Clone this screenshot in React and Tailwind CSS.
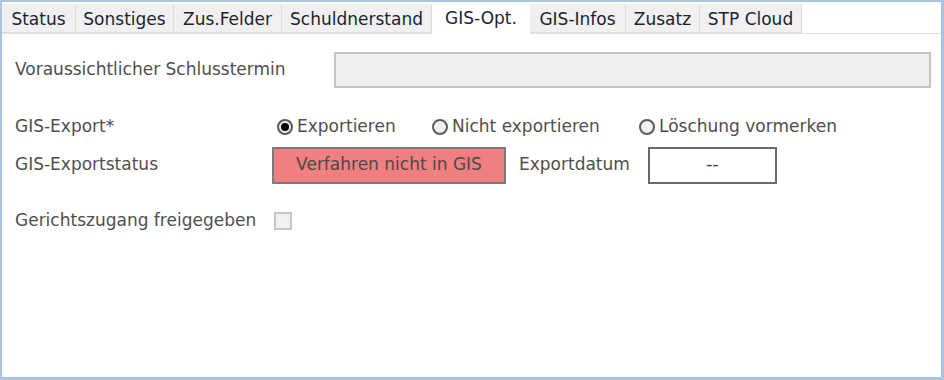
import { useState } from 'react'

const tabs = ['Status', 'Sonstiges', 'Zus.Felder', 'Schuldnerstand', 'GIS-Opt.', 'GIS-Infos', 'Zusatz', 'STP Cloud']
const widths = ['w-[74px]', 'w-[98px]', 'w-[108px]', 'w-[150px]', 'w-[98px]', 'w-[96px]', 'w-[74px]', 'w-[102px]']

function Radio({ checked, label, onClick, width }) {
  return (
    <button type="button" onClick={onClick} className={`${width} flex items-center gap-[4px]`}>
      <span className="w-[16px] h-[16px] rounded-full border-2 border-[#5a5a5a] bg-[#f0f0f0] flex items-center justify-center">
        {checked && <span className="w-[8px] h-[8px] rounded-full bg-black" />}
      </span>
      <span>{label}</span>
    </button>
  )
}

export default function App() {
  const [exportMode, setExportMode] = useState('export')
  const [freigegeben, setFreigegeben] = useState(false)

  return (
    <div className="w-[944px] h-[380px] bg-white border-l-2 border-t-2 border-r-[3px] border-b-[3px] border-[#a9c3e2] flex flex-col text-[17px] text-[#4e4e4e]" style={{ fontFamily: '"DejaVu Sans", Verdana, sans-serif' }}>
      {/* Reiter */}
      <div className="flex h-[32px] border-b border-[#e0e0e0] text-[#1e1e30]">
        {tabs.map((t, i) => {
          const active = t === 'GIS-Opt.'
          return (
            <div
              key={t}
              className={`${widths[i]} flex items-center justify-center ${active ? 'bg-white -mb-px pt-[1px]' : 'bg-[#f0f0f0] border-r border-b border-[#dcdcdc] mt-[2px] pt-[3px]'}`}
            >
              {t}
            </div>
          )
        })}
        <div className="flex-1" />
      </div>

      <div className="flex flex-col pl-[13px] pr-[10px]">
        {/* Schlusstermin */}
        <div className="flex items-center mt-[18px] h-[36px]">
          <span className="w-[319px]">Voraussichtlicher Schlusstermin</span>
          <div className="flex-1 h-[36px] bg-[#efefef] border-2 border-[#c4c4c4]" />
        </div>

        {/* GIS-Export */}
        <div className="flex items-center mt-[21px] h-[36px]">
          <span className="w-[262px]">GIS-Export*</span>
          <div className="flex items-center">
            <Radio width="w-[155px]" checked={exportMode === 'export'} label="Exportieren" onClick={() => setExportMode('export')} />
            <Radio width="w-[207px]" checked={exportMode === 'none'} label="Nicht exportieren" onClick={() => setExportMode('none')} />
            <Radio width="w-[220px]" checked={exportMode === 'delete'} label="Löschung vormerken" onClick={() => setExportMode('delete')} />
          </div>
        </div>

        {/* Exportstatus */}
        <div className="flex items-center h-[38px] mt-[1px]">
          <span className="w-[257px]">GIS-Exportstatus</span>
          <div className="w-[234px] h-[37px] bg-[#f08080] border-2 border-[#7c7c7c] flex items-center justify-center text-[#4a4a4a]">
            Verfahren nicht in GIS
          </div>
          <span className="ml-[13px] w-[129px]">Exportdatum</span>
          <div className="w-[129px] h-[37px] border-2 border-[#6a6a6a] flex items-center justify-center text-[#3a3a3a]">
            --
          </div>
        </div>

        {/* Gerichtszugang */}
        <div className="flex items-center mt-[18px] h-[38px] gap-[18px]">
          <span>Gerichtszugang freigegeben</span>
          <button
            type="button"
            onClick={() => setFreigegeben(v => !v)}
            className="w-[18px] h-[18px] bg-[#f0f0f0] border-2 border-[#c6c6c6] flex items-center justify-center text-[12px] leading-none"
          >
            {freigegeben ? '✓' : ''}
          </button>
        </div>
      </div>
    </div>
  )
}
